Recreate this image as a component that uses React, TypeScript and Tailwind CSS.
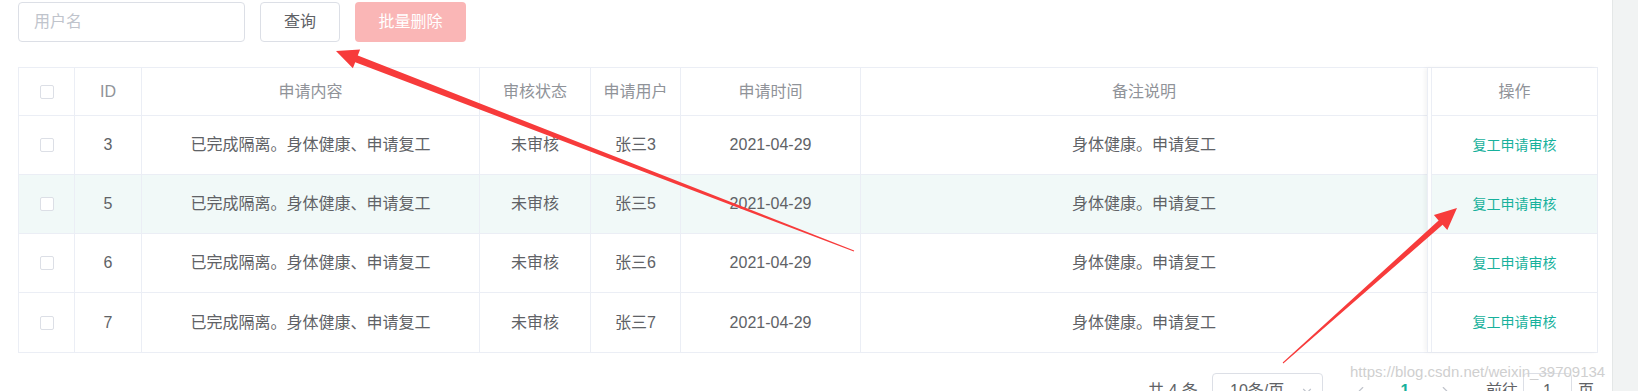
import { ChevronDown, ChevronLeft, ChevronRight } from "lucide-react";

const rows = [
  { id: 3, user: "张三3" },
  { id: 5, user: "张三5", hover: true },
  { id: 6, user: "张三6" },
  { id: 7, user: "张三7" },
];

const cols = "grid grid-cols-[56px_67px_338px_111px_90px_180px_1fr]";
const cell = "flex items-center justify-center border-r border-[#ebeef5]";

function Checkbox() {
  return <span className="block w-[14px] h-[14px] rounded-[2px] border border-[#dcdfe6] bg-white" />;
}

export default function App() {
  return (
    <div className="relative flex h-[391px] overflow-hidden bg-white font-['Liberation_Sans','Noto_Sans_CJK_SC',sans-serif] text-[16px] text-[#606266]">
      <div className="flex-1 pl-[18px] pr-[14px] pt-[2px]">
        {/* toolbar */}
        <div className="flex items-center">
          <div className="w-[227px] h-[40px] border border-[#dcdfe6] rounded-[4px] flex items-center px-[15px] text-[#c0c4cc]">
            用户名
          </div>
          <button className="ml-[15px] w-[80px] h-[40px] border border-[#dcdfe6] rounded-[4px] bg-white text-[#606266]">
            查询
          </button>
          <button className="ml-[15px] w-[111px] h-[40px] rounded-[4px] bg-[#fab6b6] text-white">
            批量删除
          </button>
        </div>

        {/* table */}
        <div className="mt-[25px] flex border border-[#ebeef5]">
          <div className="flex-1">
            <div className={`${cols} h-[48px] border-b border-[#ebeef5] text-[#909399]`}>
              <div className={cell}><Checkbox /></div>
              <div className={cell}>ID</div>
              <div className={cell}>申请内容</div>
              <div className={cell}>审核状态</div>
              <div className={cell}>申请用户</div>
              <div className={cell}>申请时间</div>
              <div className="flex items-center justify-center">备注说明</div>
            </div>
            {rows.map((r, i) => (
              <div
                key={r.id}
                className={`${cols} h-[59px] ${i < rows.length - 1 ? "border-b border-[#ebeef5]" : ""} ${r.hover ? "bg-[#f1f9f8]" : ""}`}
              >
                <div className={cell}><Checkbox /></div>
                <div className={cell}>{r.id}</div>
                <div className={cell}>已完成隔离。身体健康、申请复工</div>
                <div className={cell}>未审核</div>
                <div className={cell}>{r.user}</div>
                <div className={cell}>2021-04-29</div>
                <div className="flex items-center justify-center">身体健康。申请复工</div>
              </div>
            ))}
          </div>
          <div className="w-[170px] border-l border-[#ebeef5] shadow-[-2px_0_4px_rgba(0,0,0,0.05)] bg-white">
            <div className="h-[48px] border-b border-l border-[#ebeef5] ml-[3px] flex items-center justify-center text-[#909399]">
              操作
            </div>
            {rows.map((r, i) => (
              <div
                key={r.id}
                className={`h-[59px] ml-[3px] border-l border-[#ebeef5] flex items-center justify-center text-[14px] text-[#17b19c] ${i < rows.length - 1 ? "border-b" : ""} ${r.hover ? "bg-[#f1f9f8]" : ""}`}
              >
                复工申请审核
              </div>
            ))}
          </div>
        </div>

        {/* pagination */}
        <div className="mt-[20px] h-[36px] flex items-center pl-[1130px] whitespace-nowrap">
          <span className="w-[64px]">共 4 条</span>
          <div className="w-[111px] h-[36px] border border-[#dcdfe6] rounded-[4px] flex items-center justify-between pl-[17px] pr-[8px]">
            <span>10条/页</span>
            <ChevronDown size={14} className="text-[#c0c4cc]" />
          </div>
          <div className="ml-[23px] w-[30px] flex justify-center text-[#c0c4cc]">
            <ChevronLeft size={14} />
          </div>
          <div className="ml-[14px] w-[30px] text-center font-bold text-[#17b19c]">1</div>
          <div className="ml-[10px] w-[30px] flex justify-center text-[#c0c4cc]">
            <ChevronRight size={14} />
          </div>
          <span className="ml-[26px]">前往</span>
          <div className="ml-[5px] w-[49px] h-[36px] border border-[#dcdfe6] rounded-[4px] flex items-center justify-center">
            1
          </div>
          <span className="ml-[6px]">页</span>
        </div>
      </div>

      {/* scrollbar strip */}
      <div className="w-[26px] bg-[#f1f3f3] border-l border-[#e4e7e7]" />

      {/* watermark */}
      <div className="absolute left-[1350px] top-[364px] text-[15px] leading-none text-[#cfcfcf] pointer-events-none">
        https://blog.csdn.net/weixin_39709134
      </div>

      {/* red annotation arrows */}
      <svg className="absolute inset-0 pointer-events-none" width="1638" height="391">
        <polygon
          fill="#f73b3b"
          points="336,51 360.1,49.6 357.8,55.6 854.2,250.5 853.8,251.5 355.2,62.2 352.9,68.2"
        />
        <polygon
          fill="#f73b3b"
          points="1457,208 1447.3,230.1 1442.6,224.8 1283.3,363.4 1282.7,362.6 1438.6,220.4 1433.9,215.1"
        />
      </svg>
    </div>
  );
}
